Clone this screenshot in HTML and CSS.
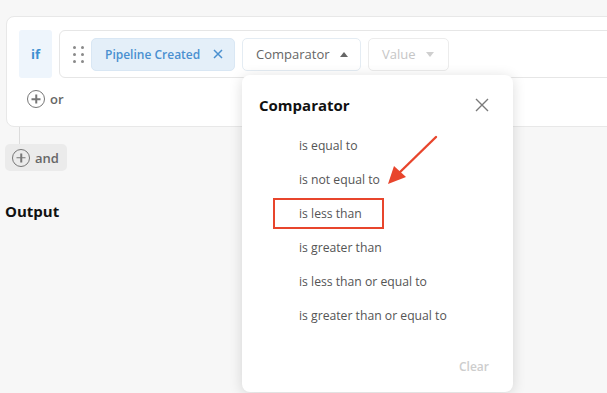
FILE: index.html
```html
<!DOCTYPE html>
<html lang="en">
  <head>
    <meta charset="UTF-8" />
    <title>Condition builder</title>
    <link rel="stylesheet" href="styles.css">
  </head>
  <body>
    <div class="page">
      <!-- Condition card -->
      <div class="card">
        <div class="rule">
          <div class="if-box">if</div>
          <div class="cond">
            <span class="drag">
              <i></i><i></i><i></i><i></i><i></i><i></i>
            </span>
            <span class="chip">
              Pipeline Created
              <svg class="chip-x" width="10" height="10" viewBox="0 0 10 10">
                <path d="M1 1L9 9M9 1L1 9" stroke="#4a90d0" stroke-width="1.5" />
              </svg>
            </span>
            <div class="picker">
              <button class="select">
                Comparator <span class="caret up"></span>
              </button>

              <!-- Comparator popover -->
              <div class="popover">
                <div class="pop-head">
                  <h2>Comparator</h2>
                  <svg class="close" width="14" height="14" viewBox="0 0 14 14">
                    <path d="M1 1L13 13M13 1L1 13" stroke="#7a7a7a" stroke-width="1.4" />
                  </svg>
                </div>
                <ul class="options">
                  <li>is equal to</li>
                  <li>is not equal to</li>
                  <li>is less than</li>
                  <li>is greater than</li>
                  <li>is less than or equal to</li>
                  <li>is greater than or equal to</li>
                </ul>
                <div class="pop-foot">Clear</div>

                <div class="mark"></div>
                <svg class="arrow" width="60" height="56" viewBox="0 0 60 56">
                  <path d="M52 3L14 40" stroke="#e8452c" stroke-width="2.4" stroke-linecap="round" />
                  <path d="M4 50L10 32L22 43Z" fill="#e8452c" />
                </svg>
              </div>
            </div>
            <button class="select muted">
              Value <span class="caret down"></span>
            </button>
          </div>
        </div>
        <div class="or-row">
          <span class="plus"></span>
          or
        </div>
      </div>

      <div class="connector"></div>
      <button class="and-btn">
        <span class="plus"></span>
        and
      </button>

      <h3 class="output">Output</h3>
    </div>
  </body>
</html>
```

FILE: styles.css
```css
* {
  box-sizing: border-box;
}
html,
body {
  margin: 0;
  height: 100%;
}
body {
  font-family: "Open Sans", sans-serif;
  background: #f7f7f7;
  overflow: hidden;
  color: #555;
}
.page {
  padding: 16px 0 0 6px;
}
.card {
  background: #fff;
  border: 1px solid #e8e8e8;
  border-radius: 8px;
  margin-right: -40px;
  padding: 13px 0 12px 12px;
  height: 111px;
}
.rule {
  display: flex;
  gap: 7px;
  height: 48px;
}
.if-box {
  width: 33px;
  background: #eef5fc;
  border-radius: 3px;
  color: #3d8fd1;
  font-weight: 700;
  font-size: 13px;
  display: flex;
  align-items: center;
  justify-content: center;
}
.cond {
  flex: 1;
  border: 1px solid #e6e6e6;
  border-radius: 6px;
  display: flex;
  align-items: center;
  gap: 7px;
  padding-left: 13px;
}
.drag {
  display: grid;
  grid-template-columns: 3px 3px;
  column-gap: 5px;
  row-gap: 4px;
}
.drag i {
  width: 3px;
  height: 3px;
  border-radius: 50%;
  background: #8a8a8a;
}
.chip {
  height: 33px;
  width: 144px;
  background: #e4eff9;
  border: 1px solid #d9e7f4;
  border-radius: 5px;
  color: #4a90d0;
  font-size: 12px;
  font-weight: 600;
  display: flex;
  align-items: center;
  padding-left: 13px;
  gap: 9px;
}
.chip-x {
  margin-left: 4px;
}
.picker {
  position: relative;
}
.select {
  height: 33px;
  background: #fff;
  border: 1px solid #e4ecf3;
  border-radius: 5px;
  font-family: "Open Sans", sans-serif;
  font-size: 13px;
  color: #666;
  padding: 0 14px 0 13px;
  display: flex;
  align-items: center;
  gap: 10px;
}
.picker .select {
  width: 119px;
}
.select.muted {
  width: 81px;
  color: #c6c6c6;
  border-color: #ececec;
}
.caret {
  width: 0;
  height: 0;
  border-left: 4px solid transparent;
  border-right: 4px solid transparent;
}
.caret.up {
  border-bottom: 5px solid #666;
}
.caret.down {
  border-top: 5px solid #cfcfcf;
}
.or-row {
  display: flex;
  align-items: center;
  gap: 5px;
  margin: 12px 0 0 8px;
  font-size: 13px;
  font-weight: 600;
  color: #666;
}
.plus {
  width: 18px;
  height: 18px;
  border: 1.5px solid #777;
  border-radius: 50%;
  position: relative;
}
.plus::before,
.plus::after {
  content: "";
  position: absolute;
  left: 50%;
  top: 50%;
  background: #777;
  transform: translate(-50%, -50%);
}
.plus::before {
  width: 9px;
  height: 1.5px;
}
.plus::after {
  width: 1.5px;
  height: 9px;
}
.connector {
  width: 1px;
  height: 17px;
  background: #dcdcdc;
  margin-left: 13px;
}
.and-btn {
  height: 27px;
  width: 62px;
  margin-left: -1px;
  background: #ebebeb;
  border: none;
  border-radius: 5px;
  font-family: "Open Sans", sans-serif;
  font-size: 13px;
  font-weight: 600;
  color: #666;
  display: flex;
  align-items: center;
  gap: 5px;
  padding: 0 0 0 7px;
}
.output {
  margin: 30px 0 0 -1px;
  font-size: 15px;
  font-weight: 700;
  color: #111;
}
.popover {
  position: absolute;
  top: 37px;
  left: 0;
  width: 271px;
  height: 317px;
  background: #fff;
  border-radius: 8px;
  box-shadow: 0 2px 14px rgba(0, 0, 0, 0.14);
  z-index: 10;
  padding: 19px 24px 0 17px;
}
.pop-head {
  display: flex;
  justify-content: space-between;
  align-items: center;
}
.pop-head h2 {
  margin: 0;
  font-size: 15px;
  font-weight: 700;
  color: #111;
  line-height: 22px;
}
.options {
  list-style: none;
  margin: 13px 0 0;
  padding: 0 0 0 40px;
}
.options li {
  font-size: 12.2px;
  line-height: 34px;
  color: #555;
}
.pop-foot {
  text-align: right;
  font-size: 12px;
  font-weight: 600;
  color: #cdcdcd;
  margin-top: 25px;
}
.mark {
  position: absolute;
  left: 31px;
  top: 123px;
  width: 111px;
  height: 31px;
  border: 2px solid #e8452c;
}
.arrow {
  position: absolute;
  left: 142px;
  top: 59px;
}
```
